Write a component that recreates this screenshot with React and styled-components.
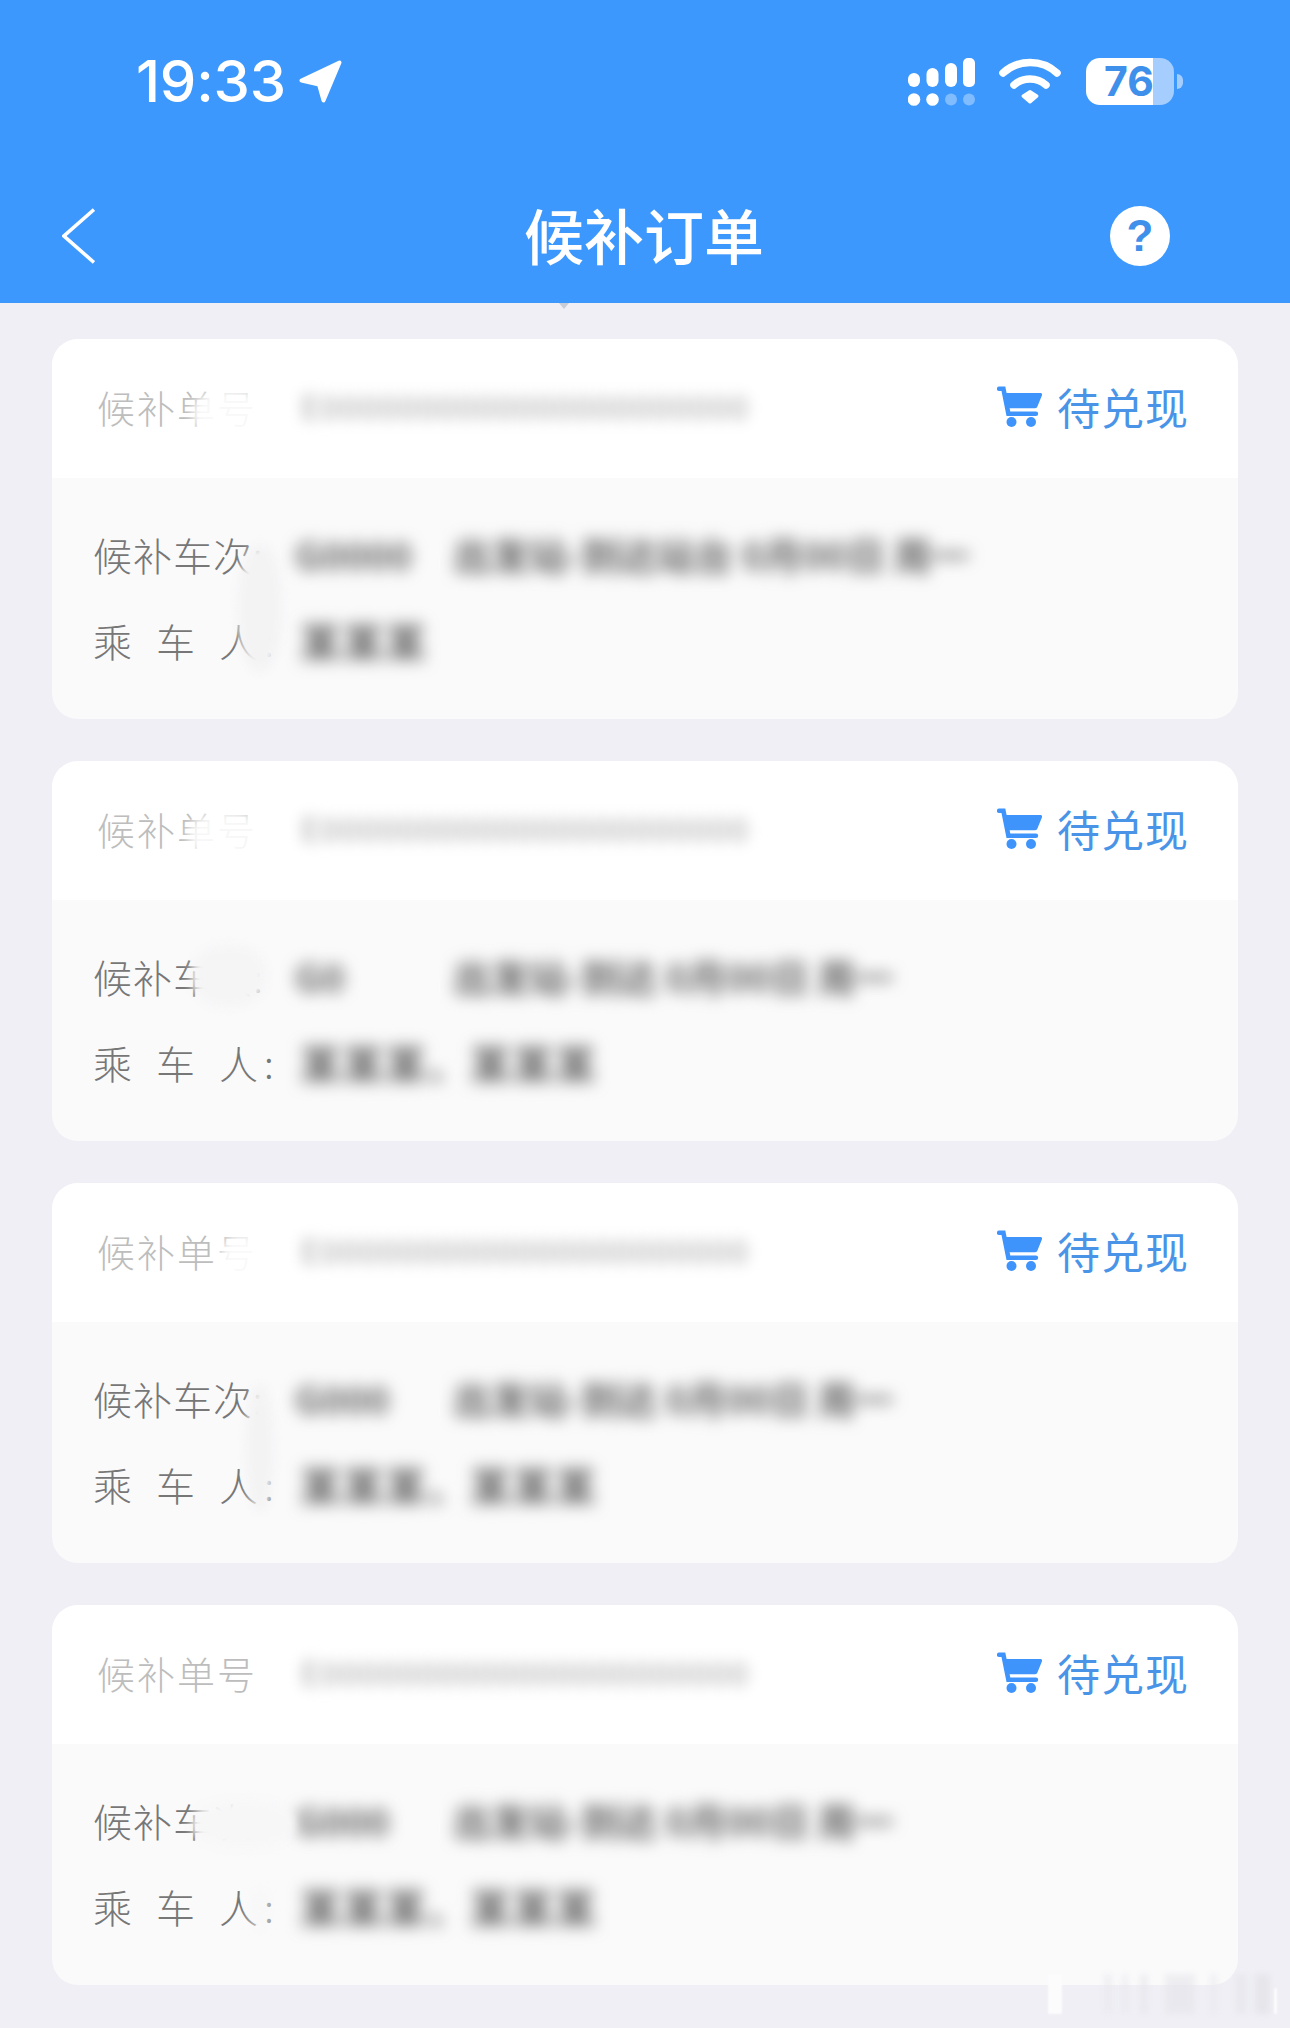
import React from "react";
import styled, { createGlobalStyle } from "styled-components";

const GlobalStyle = createGlobalStyle`
  html, body {
    margin: 0;
    padding: 0;
    background: #efeff5;
    font-family: "Noto Sans CJK SC", "Liberation Sans", sans-serif;
  }
`;

const Page = styled.div`
  position: relative;
  width: 1290px;
  height: 2028px;
  overflow: hidden;
  background: #efeff5;
`;

// 상단 헤더
const Header = styled.header`
  position: relative;
  height: 303px;
  box-sizing: border-box;
  padding-top: 56px;
  background: #3d98fd;
`;

const Notch = styled.i`
  position: absolute;
  left: 559px;
  bottom: -6px;
  border-left: 5px solid transparent;
  border-right: 5px solid transparent;
  border-top: 6px solid #c8ccd6;
`;

const StatusBar = styled.div`
  display: flex;
  align-items: center;
  height: 50px;
  padding: 0 107px 0 136px;
  color: #fff;
`;

const Time = styled.span`
  font-family: Inter, "Liberation Sans", sans-serif;
  font-size: 58px;
  font-weight: 500;
  line-height: 50px;
  letter-spacing: -0.2px;
`;

const ArrowIcon = styled.svg`
  width: 43px;
  height: 43px;
  margin-left: 13px;
`;

const StatusIcons = styled.div`
  display: flex;
  align-items: center;
  margin-left: auto;
`;

const WifiIcon = styled.svg`
  width: 62px;
  height: 46px;
  margin-left: 24px;
`;

const Battery = styled.div`
  position: relative;
  width: 88px;
  height: 47px;
  margin-left: 25px;
  margin-right: 9px;
  border-radius: 14px;
  background: linear-gradient(90deg, #fff 0 67px, #a5cdfd 67px);
  color: #3f90ea;
  font-family: Inter, "Liberation Sans", sans-serif;
  font-size: 41px;
  font-weight: 700;
  line-height: 47px;
  text-indent: 18px;

  &::after {
    content: "";
    position: absolute;
    right: -9px;
    top: 16px;
    width: 6px;
    height: 15px;
    border-radius: 0 8px 8px 0;
    background: #a5cdfd;
  }
`;

const Nav = styled.nav`
  display: flex;
  align-items: center;
  height: 120px;
  margin-top: 70px;
  padding: 0 120px 0 62px;
`;

const BackIcon = styled.svg`
  width: 33px;
  height: 56px;
`;

const Title = styled.h1`
  margin: 0 0 5px 429px;
  color: #fff;
  font-size: 60px;
  font-weight: 500;
  line-height: 80px;
`;

const Help = styled.div`
  width: 60px;
  height: 60px;
  margin-left: auto;
  border-radius: 50%;
  background: #fff;
  color: #3f90ea;
  font-family: "Liberation Sans", sans-serif;
  font-size: 44px;
  font-weight: 700;
  line-height: 60px;
  text-align: center;
`;

// 주문 목록
const List = styled.main`
  display: flex;
  flex-direction: column;
  gap: 42px;
  padding: 36px 52px 0;
`;

const Card = styled.article`
  position: relative;
  height: 380px;
  border-radius: 26px;
  overflow: hidden;
  background: #fafafb;
`;

const CardHead = styled.div`
  display: flex;
  align-items: center;
  height: 139px;
  box-sizing: border-box;
  padding: 0 49px 5px 45px;
  background: #fff;
`;

const HeadLabel = styled.span`
  width: 203px;
  color: #bdbdbd;
  font-size: 38px;
  font-weight: 300;
  letter-spacing: 2px;
  white-space: nowrap;
`;

const Status = styled.div`
  display: flex;
  align-items: center;
  margin-left: auto;
  color: #4a94e8;
  font-size: 43px;
  letter-spacing: 1px;
`;

const CartIcon = styled.svg`
  width: 45px;
  height: 41px;
  margin-right: 15px;
`;

const CardBody = styled.div`
  padding: 33px 41px 0;
`;

const Row = styled.div`
  display: flex;
  align-items: center;
  height: 86px;
`;

const RowLabel = styled.span`
  flex: none;
  width: 202px;
  color: #777;
  font-size: 39px;
  font-weight: 300;
  letter-spacing: ${(p) => p.$spacing || 1}px;
  white-space: nowrap;
`;

const Colon = styled.span`
  margin-left: ${(p) => p.$pull}px;
  letter-spacing: 0;
`;

const Hidden = styled.span`
  flex: none;
  width: ${(p) => p.$w}px;
  margin-left: ${(p) => p.$ml || 0}px;
  color: ${(p) => p.$color || "#666"};
  font-size: ${(p) => p.$size || 38}px;
  font-weight: 700;
  letter-spacing: ${(p) => p.$track || 0}px;
  line-height: 50px;
  white-space: nowrap;
  filter: blur(${(p) => p.$blur || 8}px);
`;

// 가려진 부분 위의 얼룩
const Smudge = styled.i`
  position: absolute;
  left: ${(p) => p.$x}px;
  top: ${(p) => p.$y}px;
  width: ${(p) => p.$w}px;
  height: ${(p) => p.$h}px;
  border-radius: 45%;
  background: ${(p) => p.$bg || "#fafafb"};
  opacity: ${(p) => p.$o || 1};
  filter: blur(${(p) => p.$b || 5}px);
`;

const Stripes = styled.i`
  position: absolute;
  left: 1090px;
  bottom: 14px;
  width: 190px;
  height: 40px;
  opacity: 0.55;
  background: linear-gradient(
    90deg,
    transparent 0 14px,
    #e7e7ec 14px 22px,
    transparent 22px 32px,
    #e7e7ec 32px 38px,
    transparent 38px 50px,
    #e4e4ea 50px 58px,
    transparent 58px 75px,
    #e4e4e9 75px 105px,
    transparent 105px 120px,
    #e7e7ec 120px 127px,
    transparent 127px 145px,
    #e4e4ea 145px 157px,
    transparent 157px 165px,
    #dedee3 165px 180px,
    transparent 180px
  );
  filter: blur(3px);
`;

const WhiteMark = styled.i`
  position: absolute;
  left: ${(p) => p.$x}px;
  bottom: 14px;
  width: ${(p) => p.$w}px;
  height: ${(p) => p.$h}px;
  background: #fcfcfd;
  filter: blur(1px);
`;

const orders = [
  {
    code: "G0000",
    codeW: 119,
    route: "出发站-到达站台 0月00日 周一",
    names: "某某某",
    smudges: [
      { $x: 140, $y: 50, $w: 76, $h: 50, $bg: "#fff", $o: 0.9 },
      { $x: 186, $y: 206, $w: 44, $h: 126, $bg: "#f3f3f4" },
    ],
  },
  {
    code: "G0",
    codeW: 57,
    route: "出发站-到达 0月00日 周一",
    names: "某某某、某某某",
    smudges: [
      { $x: 136, $y: 50, $w: 76, $h: 50, $bg: "#fff", $o: 0.88 },
      { $x: 139, $y: 184, $w: 76, $h: 62, $bg: "#f5f5f6" },
    ],
  },
  {
    code: "G000",
    codeW: 106,
    route: "出发站-到达 0月00日 周一",
    names: "某某某、某某某",
    smudges: [
      { $x: 168, $y: 50, $w: 46, $h: 50, $bg: "#fff", $o: 0.9 },
      { $x: 194, $y: 202, $w: 28, $h: 126, $bg: "#f3f3f4" },
    ],
  },
  {
    code: "G000",
    codeW: 106,
    route: "出发站-到达 0月00日 周一",
    names: "某某某、某某某",
    smudges: [
      { $x: 139, $y: 194, $w: 104, $h: 50, $bg: "#f7f7f8" },
      { $x: 196, $y: 282, $w: 24, $h: 46, $bg: "#f7f7f8", $o: 0.6 },
    ],
  },
];

const Signal = () => (
  <svg width="67" height="49" viewBox="0 0 67 49" fill="#fff">
    <rect x="0" y="16" width="12" height="14" rx="6" />
    <rect x="18.5" y="11" width="12" height="19" rx="6" />
    <rect x="37" y="6" width="12" height="24" rx="6" />
    <rect x="55" y="1" width="12" height="29" rx="5" />
    <circle cx="6" cy="42.5" r="6.3" />
    <circle cx="24.5" cy="42.5" r="6.3" />
    <circle cx="43" cy="42.5" r="6" opacity="0.35" />
    <circle cx="61" cy="42.5" r="6" opacity="0.35" />
  </svg>
);

const OrderCard = ({ order }) => (
  <Card>
    <CardHead>
      <HeadLabel>候补单号</HeadLabel>
      <Hidden $w={453} $color="#c4c4c4" $size={33} $blur={7}>
        E0000000000000000000000
      </Hidden>
      <Status>
        <CartIcon viewBox="0 0 45 41">
          <path d="M8 7h35.5c1.2 0 1.9 1 1.5 2.2l-4.6 11.4c-.4 1-1.2 1.6-2.3 1.6H11.5z" fill="#3f94fb" />
          <path d="M2.2 2.8h4.2l5 25h27.5" fill="none" stroke="#3f94fb" strokeWidth="4.6" strokeLinecap="round" />
          <circle cx="14.5" cy="36" r="5" fill="#3f94fb" />
          <circle cx="34" cy="36" r="5" fill="#3f94fb" />
        </CartIcon>
        待兑现
      </Status>
    </CardHead>
    <CardBody>
      <Row>
        <RowLabel>候补车次:</RowLabel>
        <Hidden $w={order.codeW}>{order.code}</Hidden>
        <Hidden $w={524} $ml={158 - order.codeW}>
          {order.route}
        </Hidden>
      </Row>
      <Row>
        <RowLabel $spacing={24}>
          乘车人<Colon $pull={-18}>:</Colon>
        </RowLabel>
        <Hidden $w={300} $ml={5} $size={41} $track={1.5}>
          {order.names}
        </Hidden>
      </Row>
    </CardBody>
    {order.smudges.map((s, i) => (
      <Smudge key={i} {...s} />
    ))}
  </Card>
);

const App = () => (
  <Page>
    <GlobalStyle />
    <Header>
      <StatusBar>
        <Time>19:33</Time>
        <ArrowIcon viewBox="0 0 43 43">
          <path d="M2.5 20.5 40.5 2.5 24.5 40.5 20 24.5z" fill="#fff" stroke="#fff" strokeWidth="4" strokeLinejoin="round" />
        </ArrowIcon>
        <StatusIcons>
          <Signal />
          <WifiIcon viewBox="0 0 62 46">
            <path d="M4 15C19 1 43 1 58 15" fill="none" stroke="#fff" strokeWidth="7.5" strokeLinecap="round" />
            <path d="M15 27C24 19 38 19 47 27" fill="none" stroke="#fff" strokeWidth="7.5" strokeLinecap="round" />
            <path d="M24 38 31 33.5 38 38 31 44z" fill="#fff" stroke="#fff" strokeWidth="3" strokeLinejoin="round" />
          </WifiIcon>
          <Battery>76</Battery>
        </StatusIcons>
      </StatusBar>
      <Nav>
        <BackIcon viewBox="0 0 33 56">
          <path d="M32 1.5 2 28l30 26.5" fill="none" stroke="#fff" strokeWidth="3.6" />
        </BackIcon>
        <Title>候补订单</Title>
        <Help>?</Help>
      </Nav>
      <Notch />
    </Header>
    <List>
      {orders.map((order, i) => (
        <OrderCard key={i} order={order} />
      ))}
    </List>
    <Stripes />
    <WhiteMark $x={1048} $w={14} $h={40} />
    <WhiteMark $x={1274} $w={3} $h={26} />
  </Page>
);

export default App;
